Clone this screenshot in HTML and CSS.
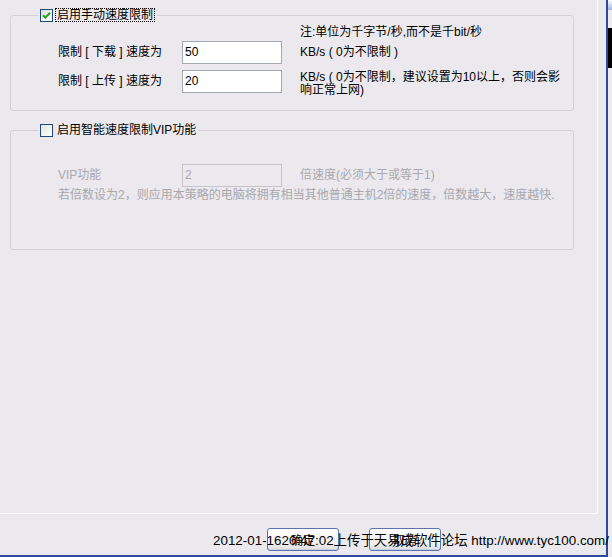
FILE: index.html
```html
<!DOCTYPE html>
<html lang="zh-CN">

<head>
    <meta charset="utf-8">
    <title>速度限制</title>
    <link rel="stylesheet" href="styles.css">
</head>

<body>
    <div class="screen">
        <div class="window">
            <div class="page">

                <fieldset class="group group-manual">
                    <legend class="group-title">
                        <span class="check">
                            <svg width="13" height="13" viewBox="0 0 13 13">
                                <defs>
                                    <linearGradient id="boxfill" x1="0" y1="0" x2="1" y2="1">
                                        <stop offset="0" stop-color="#dcdcd6"/>
                                        <stop offset="1" stop-color="#ffffff"/>
                                    </linearGradient>
                                </defs>
                                <rect x="0.5" y="0.5" width="12" height="12" fill="url(#boxfill)" stroke="#1f4a78"/>
                                <path d="M3 6.2 L5.3 8.6 L10 3.8" fill="none" stroke="#21a121" stroke-width="2"/>
                            </svg>
                        </span>
                        <span class="focus">启用手动速度限制</span>
                    </legend>

                    <div class="rows rows-manual">
                        <p class="note">注:单位为千字节/秒,而不是千bit/秒</p>

                        <div class="line line-down">
                            <span class="label">限制 [ 下载 ] 速度为</span>
                            <span class="field">50</span>
                            <span class="unit">KB/s ( 0为不限制 )</span>
                        </div>

                        <div class="line line-up">
                            <span class="label">限制 [ 上传 ] 速度为</span>
                            <span class="field">20</span>
                            <span class="unit">KB/s ( 0为不限制，建议设置为10以上，否则会影<br>响正常上网)</span>
                        </div>
                    </div>
                </fieldset>

                <fieldset class="group group-vip">
                    <legend class="group-title">
                        <span class="check">
                            <svg width="13" height="13" viewBox="0 0 13 13">
                                <defs>
                                    <linearGradient id="boxfill2" x1="0" y1="0" x2="1" y2="1">
                                        <stop offset="0" stop-color="#e2e2dc"/>
                                        <stop offset="1" stop-color="#ffffff"/>
                                    </linearGradient>
                                </defs>
                                <rect x="0.5" y="0.5" width="12" height="12" fill="url(#boxfill2)" stroke="#1f4a78"/>
                            </svg>
                        </span>
                        <span class="plain">启用智能速度限制VIP功能</span>
                    </legend>

                    <div class="rows rows-vip disabled">
                        <div class="line">
                            <span class="label">VIP功能</span>
                            <span class="field field-off">2</span>
                            <span class="unit">倍速度(必须大于或等于1)</span>
                        </div>
                        <p class="desc">若倍数设为2，则应用本策略的电脑将拥有相当其他普通主机2倍的速度，倍数越大，速度越快.</p>
                    </div>
                </fieldset>

            </div>

            <div class="actions">
                <button class="btn">确定</button>
                <button class="btn">取消</button>
            </div>

            <div class="stamp">2012-01-1620:47:02上传于天易成软件论坛 http://www.tyc100.com/</div>
        </div>

        <div class="strip">
            <div class="strip-top"></div>
            <div class="strip-dark"></div>
        </div>
    </div>
</body>

</html>
```

FILE: styles.css
```css
* {
    box-sizing: border-box;
}

body {
    margin: 0;
    width: 612px;
    height: 557px;
    overflow: hidden;
    background-color: #ebe9ee;
    font-family: "Liberation Sans", "Noto Sans CJK SC", sans-serif;
    font-size: 12px;
    color: #000;
}

p {
    margin: 0;
}

.screen {
    display: flex;
    height: 557px;
}

.window {
    position: relative;
    width: 608px;
    height: 557px;
    background-color: #ebe9ee;
    border-right: 2px solid #2c4c9e;
    border-bottom: 2px solid #2c4c9e;
}

.page {
    width: 598px;
    height: 514px;
    padding-top: 8px;
    border-right: 1px solid #fff;
    border-bottom: 1px solid #fff;
}

/* group boxes */

.group {
    width: 564px;
    min-width: 0;
    margin: 0 0 0 10px;
    padding: 0;
    border: 1px solid #d4d2d8;
    border-radius: 3px;
}

.group-vip {
    margin-top: 12px;
}

.group-title {
    display: flex;
    align-items: center;
    height: 14px;
    margin-left: 28px;
    padding: 0 2px 0 1px;
}

.check {
    display: block;
    width: 13px;
    height: 13px;
}

.check svg {
    display: block;
}

.focus {
    margin-left: 2px;
    padding: 0 1px;
    border: 1px dotted #000;
    line-height: 12px;
}

.plain {
    margin-left: 4px;
    line-height: 12px;
}

.rows {
    display: flex;
    flex-direction: column;
    padding-left: 47px;
}

.rows-manual {
    padding-top: 4px;
    padding-bottom: 13px;
}

.rows-vip {
    padding-top: 27px;
    padding-bottom: 47px;
}

.line {
    display: flex;
    align-items: center;
    height: 23px;
}

.line-down {
    margin-top: 2px;
}

.line-up {
    height: 27px;
    margin-top: 6px;
    align-items: flex-start;
}

.line-up .label {
    margin-top: 5px;
}

.line-up .unit {
    margin-top: 1px;
}

.note {
    padding-left: 242px;
    line-height: 13px;
}

.label {
    width: 124px;
    line-height: 13px;
}

.field {
    width: 100px;
    height: 23px;
    padding-left: 2px;
    line-height: 21px;
    background-color: #fff;
    border: 1px solid #a3a9b2;
}

.unit {
    padding-left: 18px;
    line-height: 13px;
}

.desc {
    margin-top: 2px;
    line-height: 13px;
}

.disabled {
    color: #a9a8ac;
}

.field-off {
    background-color: #ebe9ee;
    border-color: #c6c4ca;
}

/* buttons */

.actions {
    display: flex;
    gap: 30px;
    padding: 14px 0 0 267px;
}

.btn {
    width: 72px;
    height: 23px;
    padding: 2px 0 0;
    font-family: "Liberation Sans", "Noto Sans CJK SC", sans-serif;
    font-size: 12px;
    line-height: 14px;
    color: #000;
    text-align: center;
    vertical-align: top;
    border: 1px solid #5d74aa;
    border-radius: 3px;
    background: linear-gradient(#ffffff, #f1f0ee 70%, #dcdbe0);
    box-shadow: inset 0 -1px 0 #c8d0e6;
}

.stamp {
    position: absolute;
    left: 213px;
    top: 533px;
    font-size: 13.4px;
    line-height: 16px;
    white-space: nowrap;
    color: #000;
}

/* edge of the window behind */

.strip {
    flex: 1;
    background-color: #ecebef;
}

.strip-top {
    height: 10px;
    background: linear-gradient(#ffffff, #9db3de);
}

.strip-dark {
    height: 40px;
    margin-top: 18px;
    background-color: #000;
}
```
